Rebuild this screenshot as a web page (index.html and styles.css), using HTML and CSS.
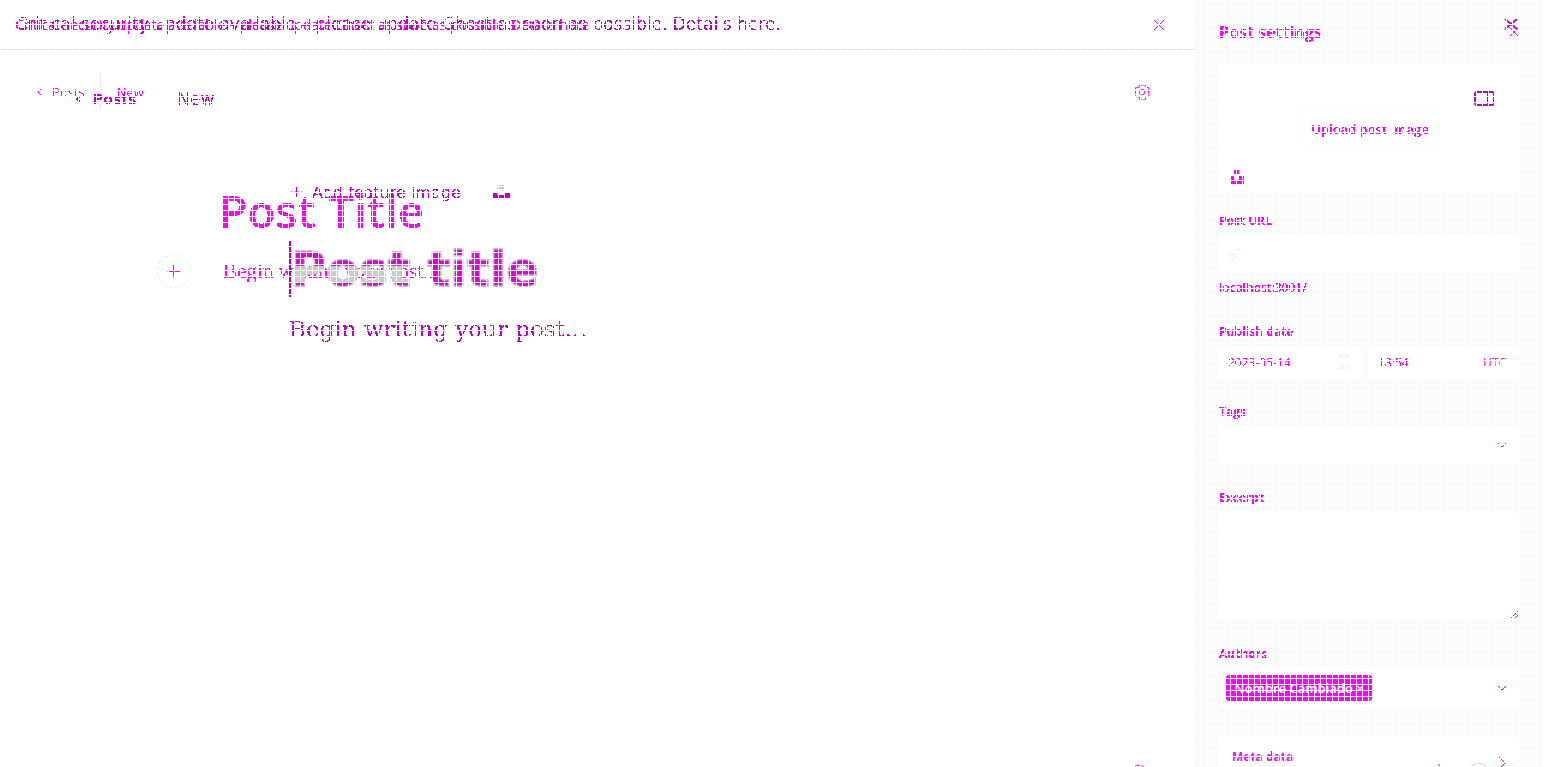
FILE: index.html
```html
<!DOCTYPE html>
<html lang="en">
<head>
<meta charset="utf-8">
<title>Post editor – comparison</title>
<link rel="stylesheet" href="styles.css">
</head>
<body>
<svg class="defs" aria-hidden="true">
  <filter id="crisp" x="0" y="0" width="100%" height="100%" color-interpolation-filters="sRGB">
    <feComponentTransfer><feFuncA type="discrete" tableValues="0 0 1 1"/></feComponentTransfer>
  </filter>
</svg>
<div class="stage">
  <section class="layer before">
    <div class="banner">
      <p>Critical security update available – please update Ghost as soon as possible. <a href="#d1">Details here.</a></p>
      <button class="icon" aria-label="Dismiss"><svg width="14" height="12" viewBox="0 0 14 12"><path d="M1 1l12 10M13 1L1 11"/></svg></button>
    </div>
    <nav class="toolbar">
      <a class="back" href="#posts"><svg width="6" height="8" viewBox="0 0 6 8"><path d="M5 1L2 4l3 3"/></svg><span>Posts</span></a>
      <span class="crumb">New</span>
      <button class="icon" aria-label="Toggle panel"><svg width="22" height="16" viewBox="0 0 22 16"><rect x="2" y="1" width="19" height="13" rx="2"/><path d="M15 1v13"/></svg></button>
    </nav>
    <main class="draft">
      <div class="feature">
        <button class="add"><svg width="14" height="10" viewBox="0 0 14 10"><path d="M1 5h13" stroke="#c9c9c9"/><path d="M7.500 0v10"/></svg>Add feature image</button>
        <button class="icon" aria-label="Unsplash"><svg class="solid" width="18" height="14" viewBox="0 0 18 14"><path d="M5 0h7v4h-7z" fill="#c9c9c9"/><path d="M0 7h5v3h7V7h6v7H0z"/></svg></button>
      </div>
      <h1>Post title</h1>
      <p class="body">Begin writing your post...</p>
    </main>
    <div class="counter"><svg width="50" height="24" viewBox="0 0 50 24"><path d="M3 7v2"/><circle cx="43" cy="15" r="9" stroke="#ccc"/></svg></div>
  </section>

  <section class="layer after">
    <div class="page">
      <div class="banner">
        <p>Critical security update available – please update Ghost as soon as possible. <a href="#d2">Details here</a></p>
        <button class="icon" aria-label="Close banner"><svg width="12" height="12" viewBox="0 0 12 12"><path d="M1 1l10 10M11 1L1 11"/></svg></button>
      </div>
      <nav class="toolbar">
        <a class="back" href="#posts"><svg width="6" height="8" viewBox="0 0 6 8"><path d="M4 1L1 4l3 3"/></svg><span>Posts</span></a>
        <span class="crumb">New</span>
        <button class="icon" aria-label="Settings"><svg width="16" height="16" viewBox="0 0 16 16"><path d="M6 1h5l1 2 3 1v3l-1 1 1 1v3l-3 1-1 3H6l-1-3-4-1V9l1-1-1-1V4l4-1z"/><circle cx="8" cy="8" r="2.800"/></svg></button>
      </nav>
      <main class="draft">
        <h2>Post Title</h2>
        <div class="line">
          <button class="plus" aria-label="Add a card"><svg width="14" height="14" viewBox="0 0 14 14"><path d="M.5 7.500h13M6.500 1v13"/></svg></button>
          <p class="body">Begin writing your post...</p>
        </div>
      </main>
      <div class="help"><svg width="16" height="16" viewBox="0 0 16 16"><circle cx="8" cy="8" r="7"/></svg></div>
    </div>
    <aside class="panel">
      <header><h3>Post settings</h3><button class="icon" aria-label="Close settings"><svg width="12" height="12" viewBox="0 0 12 12"><path d="M1 1l10 10M11 1L1 11"/></svg></button></header>
      <div class="upload">
        <button class="pick">Upload post image</button>
        <button class="icon" aria-label="Choose from Unsplash"><svg class="solid" width="14" height="14" viewBox="0 0 14 14"><path d="M4 0h5v4H4zM0 6h4v4h5V6h5v8H0z"/></svg></button>
      </div>
      <form>
        <div class="field">
          <label for="url">Post URL</label>
          <div class="box tall"><svg class="pale" width="14" height="14" viewBox="0 0 14 14"><circle cx="4" cy="10" r="3"/><path d="M6 8l3-4 4-3"/></svg><input id="url" type="text"></div>
          <p class="hint">localhost:3001/</p>
        </div>
        <div class="field">
          <label for="date">Publish date</label>
          <div class="pair">
            <div class="box date"><input id="date" type="text" value="2023-05-14"><svg class="pale" width="12" height="16" viewBox="0 0 12 16"><path d="M1 2q2-2 4 0q-2 3-4 0M7 2q2-2 4 0q-2 3-4 0M1 12h10M1 14h10"/></svg></div>
            <div class="box time"><input type="text" value="18:54" aria-label="Time"><span>UTC</span></div>
          </div>
        </div>
        <div class="field">
          <label for="tags">Tags</label>
          <div class="box tall"><input id="tags" type="text"><svg width="8" height="6" viewBox="0 0 8 6"><path d="M0 1l4 4 4-4"/></svg></div>
        </div>
        <div class="field">
          <label for="excerpt">Excerpt</label>
          <div class="area"><textarea id="excerpt"></textarea><svg class="grip" width="10" height="10" viewBox="0 0 10 10"><path d="M1 9l8-8M5 9l4-4"/></svg></div>
        </div>
        <div class="field">
          <label for="authors">Authors</label>
          <div class="box authors"><button type="button" class="tag" id="authors">Nombre Cambiado <span>×</span></button><svg width="8" height="6" viewBox="0 0 8 6"><path d="M0 1l4 4 4-4"/></svg></div>
        </div>
        <button type="button" class="meta">Meta data<svg width="8" height="14" viewBox="0 0 8 14"><path d="M1 1l6 6-6 6"/></svg></button>
      </form>
    </aside>
  </section>
</div>
</body>
</html>
```
FILE: styles.css
```css
* { box-sizing: border-box; margin: 0; }
body { background: #fff; font-family: "Open Sans", "Noto Sans", sans-serif; overflow: hidden; }
.defs { position: absolute; width: 0; height: 0; }
.stage { display: grid; height: 100vh; overflow: hidden; }
.stage::after {
  content: "";
  position: fixed;
  inset: 0;
  pointer-events: none;
  background:
    repeating-linear-gradient(to right, #fff 0 1px, transparent 1px 6px),
    repeating-linear-gradient(to bottom, #fff 0 1px, transparent 1px 6px);
  z-index: 5;
}
.layer { grid-area: 1 / 1; min-width: 0; height: 100vh; overflow: hidden; }
button, a { color: inherit; text-decoration: none; }
button { border: 0; background: none; padding: 0; font: inherit; cursor: pointer; }
.icon { display: flex; }
svg { fill: none; stroke: currentColor; stroke-width: 1; flex: none; }
svg.solid { fill: currentColor; stroke: none; }
.banner { display: flex; align-items: center; justify-content: space-between; height: 50px; white-space: nowrap; }
.toolbar, .back { display: flex; align-items: center; }
.toolbar > .icon { margin-left: auto; }

/* Previous version */
.before { color: #c000c0; font-family: "DejaVu Sans", sans-serif; z-index: 2; pointer-events: none; display: flex; flex-direction: column; }
.before .banner { padding: 0 26px 2px 16px; font-size: 17px; }
.before .banner svg, .before .toolbar svg { stroke-width: 2; }
.before .toolbar { height: 98px; padding: 0 49px 0 75px; font-size: 17px; }
.before .back { gap: 12px; font-weight: bold; font-size: 14px; }
.before .crumb { margin-left: 41px; }
.before .draft { padding: 32px 0 0 289px; flex: 1; }
.feature { display: flex; align-items: center; gap: 31px; height: 24px; }
.add { display: flex; align-items: center; gap: 9px; font-size: 16px; }
.add svg { stroke-width: 2; }
.before h1 {
  width: fit-content;
  margin-top: 37px;
  border-left: 2px solid #b000b0;
  font-size: 48px;
  line-height: 56px;
  color: transparent;
  background: linear-gradient(to bottom, transparent 45%, #cacccc 45% 75%, transparent 75%) 0 0 / 56% 100% no-repeat, #e000e0;
  background-clip: text;
  -webkit-text-stroke: 1px #cacaca;
}
.before .body { margin-top: 18px; font: 23px/28px "DejaVu Serif", serif; }
.counter { display: flex; justify-content: flex-end; height: 10px; padding-right: 58px; }

/* Current version */
.after { display: flex; color: #f0f; z-index: 1; }
.page { flex: 1; min-width: 0; display: flex; flex-direction: column; }
.page .banner { border-bottom: 1px solid #dedede; padding: 0 29px 0 15px; font-size: 14px; }
.page .toolbar { height: 36px; margin-top: 24px; padding: 0 44px 0 37px; font-size: 13px; }
.page .back { gap: 9px; align-self: stretch; padding-right: 15px; border-right: 1px solid #e2eaf4; }
.page .crumb { margin-left: 16px; }
.page .draft { padding: 68px 0 0 157px; flex: 1; }
h2 { margin-left: 62px; font-size: 46px; line-height: 64px; font-weight: 600; }
.line { display: flex; align-items: center; gap: 32px; margin-top: 12px; }
.plus { display: grid; place-items: center; width: 34px; height: 34px; border: 1px dashed #e6e6e6; border-radius: 50%; }
.page .body { font: 21px/28px "Liberation Serif", serif; }
.help { display: flex; justify-content: flex-end; height: 3px; padding-right: 47px; }

/* Settings panel */
.panel { width: 350px; padding: 20px 24px 0; background: #f9fafc; overflow: hidden; }
.panel header { display: flex; align-items: center; justify-content: space-between; height: 24px; margin-bottom: 19px; }
.panel h3 { padding-left: 1px; font-size: 16px; line-height: 23px; }
.upload { display: grid; grid-template-rows: 48px 36px 46px; height: 130px; border-radius: 4px; background: #fff; }
.pick { grid-row: 2; justify-self: center; padding: 0 11px 0 13px; border: 1px solid #fbfbfb; border-radius: 4px; font-size: 13px; font-weight: 600; }
.upload .icon { grid-row: 3; align-self: end; margin: 0 12px 9px; }
form { display: flex; flex-direction: column; gap: 24px; padding-top: 18px; }
.field { display: flex; flex-direction: column; }
.field label { padding: 0 0 4px 1px; font-size: 12px; line-height: 20px; font-weight: 700; }
.box { display: flex; align-items: center; gap: 8px; height: 32px; padding: 0 14px 0 10px; background: #fff; border-radius: 4px; font-size: 12px; }
.box.date { padding-right: 11px; }
.box.tall { height: 38px; }
.box input { flex: 1; min-width: 0; width: 0; border: 0; padding: 0; background: none; color: inherit; font: inherit; outline: 0; }
.pale { color: #e5eaec; }
.pair { display: grid; grid-template-columns: 143px 1fr; gap: 7px; }
.hint { padding: 5px 0 0 1px; font-size: 12px; line-height: 20px; font-weight: 600; }
.area { display: grid; height: 108px; border-radius: 4px; background: #fff; }
.area textarea { grid-area: 1 / 1; border: 0; background: none; resize: none; color: inherit; font: inherit; }
.grip { grid-area: 1 / 1; place-self: end; margin: 0 1px; }
.authors { height: 40px; padding-left: 8px; justify-content: space-between; }
.tag { width: 146px; height: 26px; border-radius: 3px; background: #f0f; color: #fff; font-size: 13px; font-weight: 600; }
.meta { display: flex; align-items: center; justify-content: space-between; height: 60px; margin-top: 4px; padding: 0 14px 20px; border-radius: 4px; background: #fff; font-size: 12px; font-weight: 700; }
.meta svg { margin-top: 14px; }

.banner p, .back, .crumb, .add, h2, .body, .panel h3, .pick, .field label, .hint, .box input { filter: url(#crisp); }
```
